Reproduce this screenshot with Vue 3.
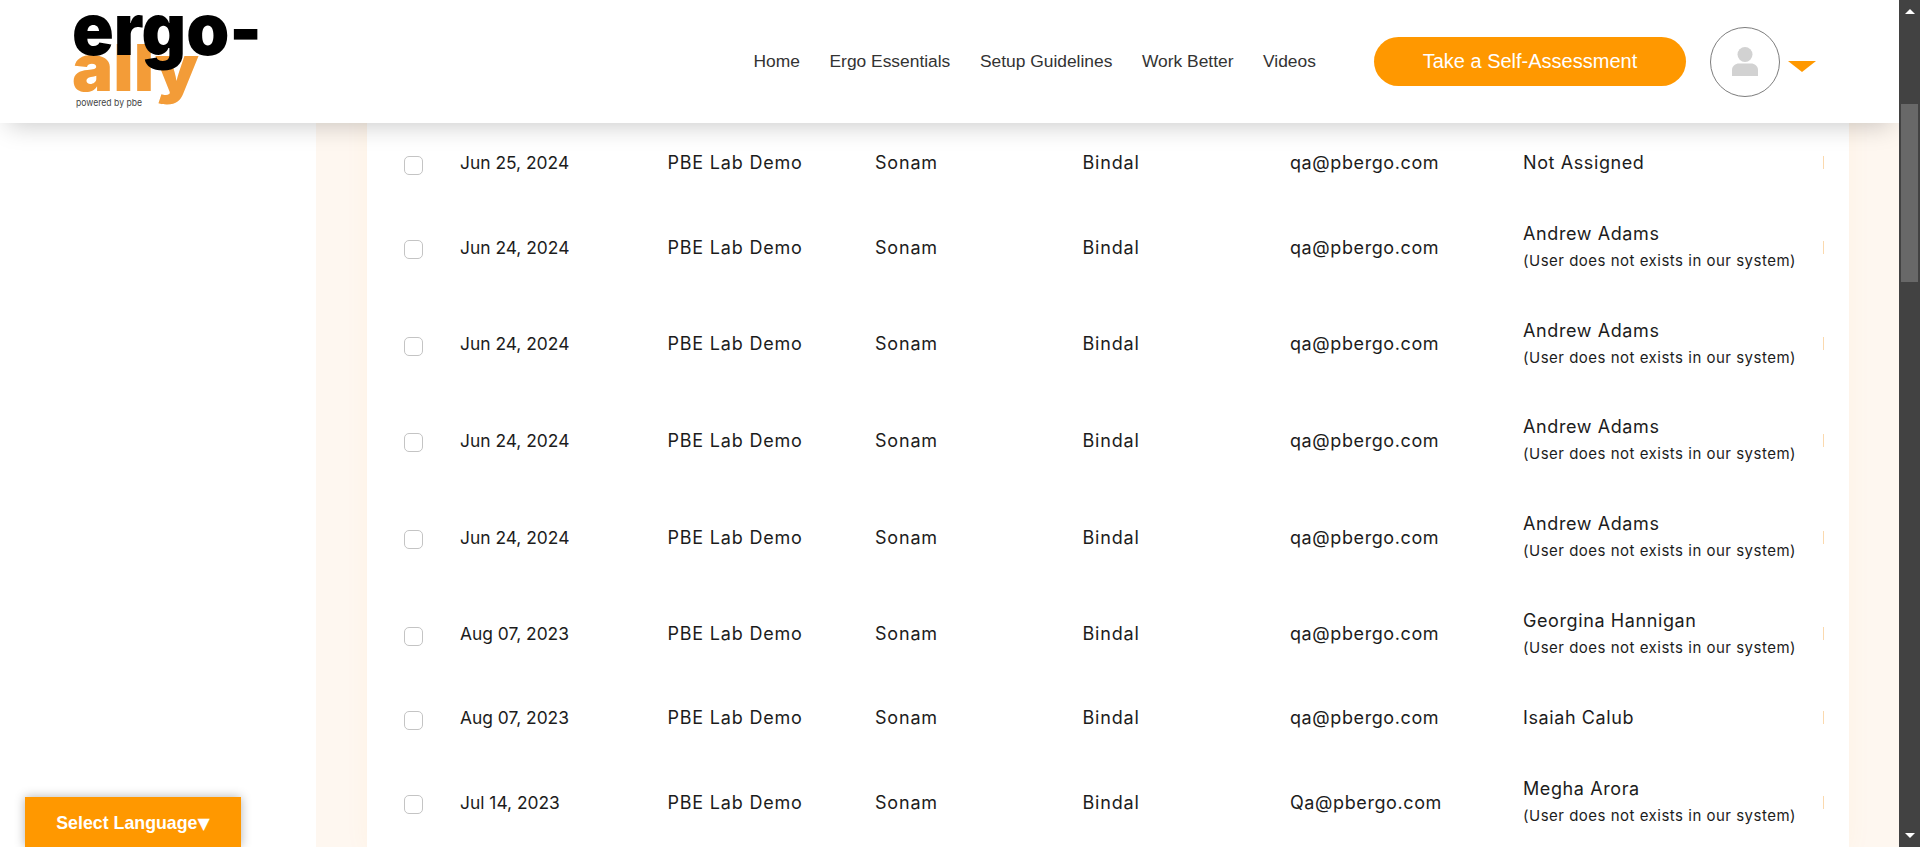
<template>
  <div class="screen">
    <div class="page">
      <header class="topbar">
        <svg class="logo" width="200" height="123" viewBox="0 0 200 123">
          <text class="logo-ally" x="12" y="91" textLength="127" lengthAdjust="spacingAndGlyphs">ally</text>
          <text class="logo-ergo" x="12" y="55" textLength="190" lengthAdjust="spacingAndGlyphs">ergo-</text>
          <text class="logo-sub" x="16" y="106" textLength="66" lengthAdjust="spacingAndGlyphs">powered by pbe</text>
        </svg>
        <nav class="nav">
          <a v-for="link in links" :key="link">{{ link }}</a>
        </nav>
        <button class="cta">Take a Self-Assessment</button>
        <div class="avatar">
          <svg width="26" height="29" viewBox="0 0 26 29">
            <circle cx="13" cy="7.500" r="7.500" fill="#d2d2d2" />
            <path d="M0 29V23C0 19 3.500 16.500 7 16.500H19C22.500 16.500 26 19 26 23V29Z" fill="#d2d2d2" />
          </svg>
        </div>
        <span class="caret"></span>
      </header>

      <main class="band">
        <div class="card">
          <div v-for="(row, i) in rows" :key="i" class="row">
            <span class="check"></span>
            <span class="date">{{ row.date }}</span>
            <span class="wide">PBE Lab Demo</span>
            <span class="wide">Sonam</span>
            <span class="wide">Bindal</span>
            <span>{{ row.email || 'qa@pbergo.com' }}</span>
            <div class="assigned">
              <div>{{ row.name }}</div>
              <div v-if="row.missing" class="note">(User does not exists in our system)</div>
            </div>
            <span class="cut"></span>
          </div>
        </div>
      </main>

      <button class="lang">Select Language<span class="lang-arrow">▼</span></button>
    </div>

    <div class="scrollbar">
      <span class="arrow-up"></span>
      <span class="thumb"></span>
      <span class="arrow-down"></span>
    </div>
  </div>
</template>

<script setup>
const links = ['Home', 'Ergo Essentials', 'Setup Guidelines', 'Work Better', 'Videos']

const rows = [
  { date: 'Jun 25, 2024', name: 'Not Assigned' },
  { date: 'Jun 24, 2024', name: 'Andrew Adams', missing: true },
  { date: 'Jun 24, 2024', name: 'Andrew Adams', missing: true },
  { date: 'Jun 24, 2024', name: 'Andrew Adams', missing: true },
  { date: 'Jun 24, 2024', name: 'Andrew Adams', missing: true },
  { date: 'Aug 07, 2023', name: 'Georgina Hannigan', missing: true },
  { date: 'Aug 07, 2023', name: 'Isaiah Calub' },
  { date: 'Jul 14, 2023', name: 'Megha Arora', missing: true, email: 'Qa@pbergo.com' },
]
</script>

<style>
html, body {
  margin: 0;
  height: 100%;
  overflow: hidden;
}
</style>

<style scoped>
.screen {
  display: flex;
  height: 847px;
  overflow: hidden;
  background: #fff;
}

.page {
  position: relative;
  width: 1899px;
  height: 847px;
  overflow: hidden;
}

.topbar {
  position: absolute;
  top: 0;
  left: 0;
  right: 0;
  z-index: 5;
  height: 123px;
  display: flex;
  align-items: center;
  background: #fff;
  box-shadow: 0 10px 24px -8px rgba(0, 0, 0, 0.22);
  font-family: "Liberation Sans", Arial, sans-serif;
}

.logo {
  margin-left: 60px;
  flex-shrink: 0;
  font-family: "Inter", "Liberation Sans", sans-serif;
  font-weight: 900;
  overflow: visible;
}

.logo-ergo {
  font-size: 72px;
  fill: #000;
}

.logo-ally {
  font-size: 65px;
  fill: #f39c38;
}

.logo-sub {
  font-size: 9.500px;
  font-weight: 400;
  fill: #444;
}

.nav {
  display: flex;
  gap: 29.600px;
  margin-left: 493.500px;
  font-size: 17.400px;
  color: #333;
}

.cta {
  width: 312px;
  height: 49px;
  margin-left: 58px;
  border: 0;
  border-radius: 25px;
  background: #ff9800;
  color: #fff;
  font-family: inherit;
  font-size: 20px;
}

.avatar {
  width: 68px;
  height: 68px;
  margin-left: 24px;
  border: 1px solid #7d7d7d;
  border-radius: 50%;
  display: flex;
  align-items: center;
  justify-content: center;
}

.caret {
  width: 0;
  height: 0;
  margin: 9px 0 0 8px;
  border-left: 14px solid transparent;
  border-right: 14px solid transparent;
  border-top: 11px solid #ff9800;
}

.band {
  margin-left: 316px;
  padding: 0 50px 0 51px;
  background: #fef7f0;
}

.card {
  padding-top: 127px;
  background: #fff;
  box-shadow: 0 0 24px rgba(255, 150, 30, 0.05);
  font-family: "Inter", "Liberation Sans", sans-serif;
  font-size: 18px;
  letter-spacing: 0.600px;
  color: #1c1c1c;
}

.row {
  display: grid;
  grid-template-columns: 56px 207.500px 207.500px 207.500px 207.500px 233px 300px 1px;
  align-items: center;
  padding: 21.300px 0 21.300px 37px;
  min-height: 29.400px;
  line-height: 27px;
}

.date {
  font-size: 17.400px;
  letter-spacing: 0;
}

.wide {
  letter-spacing: 0.800px;
}

.check {
  width: 17px;
  height: 17px;
  margin-top: 5px;
  border: 1px solid #c4c4c4;
  border-radius: 5px;
}

.assigned .note {
  font-size: 15px;
  letter-spacing: 0.500px;
}

.cut {
  width: 1px;
  height: 13px;
  background: #fbd9ae;
}

.lang {
  position: absolute;
  left: 25px;
  bottom: 0;
  z-index: 4;
  width: 216px;
  height: 50px;
  padding-top: 3px;
  border: 0;
  background: #ff9800;
  box-shadow: 0 0 10px rgba(0, 0, 0, 0.3);
  color: #fff;
  font-family: "Liberation Sans", Arial, sans-serif;
  font-size: 17.800px;
  font-weight: 700;
}

.lang-arrow {
  font-family: "DejaVu Sans", sans-serif;
  font-size: 16px;
}

.scrollbar {
  width: 21px;
  height: 847px;
  background: #424242;
  display: flex;
  flex-direction: column;
  align-items: center;
}

.arrow-up {
  width: 0;
  height: 0;
  margin-top: 9px;
  border-left: 5px solid transparent;
  border-right: 5px solid transparent;
  border-bottom: 5px solid #fff;
}

.thumb {
  width: 17px;
  height: 178px;
  margin-top: 90px;
  background: #686868;
}

.arrow-down {
  width: 0;
  height: 0;
  margin-top: auto;
  margin-bottom: 9px;
  border-left: 5px solid transparent;
  border-right: 5px solid transparent;
  border-top: 5px solid #fff;
}
</style>
